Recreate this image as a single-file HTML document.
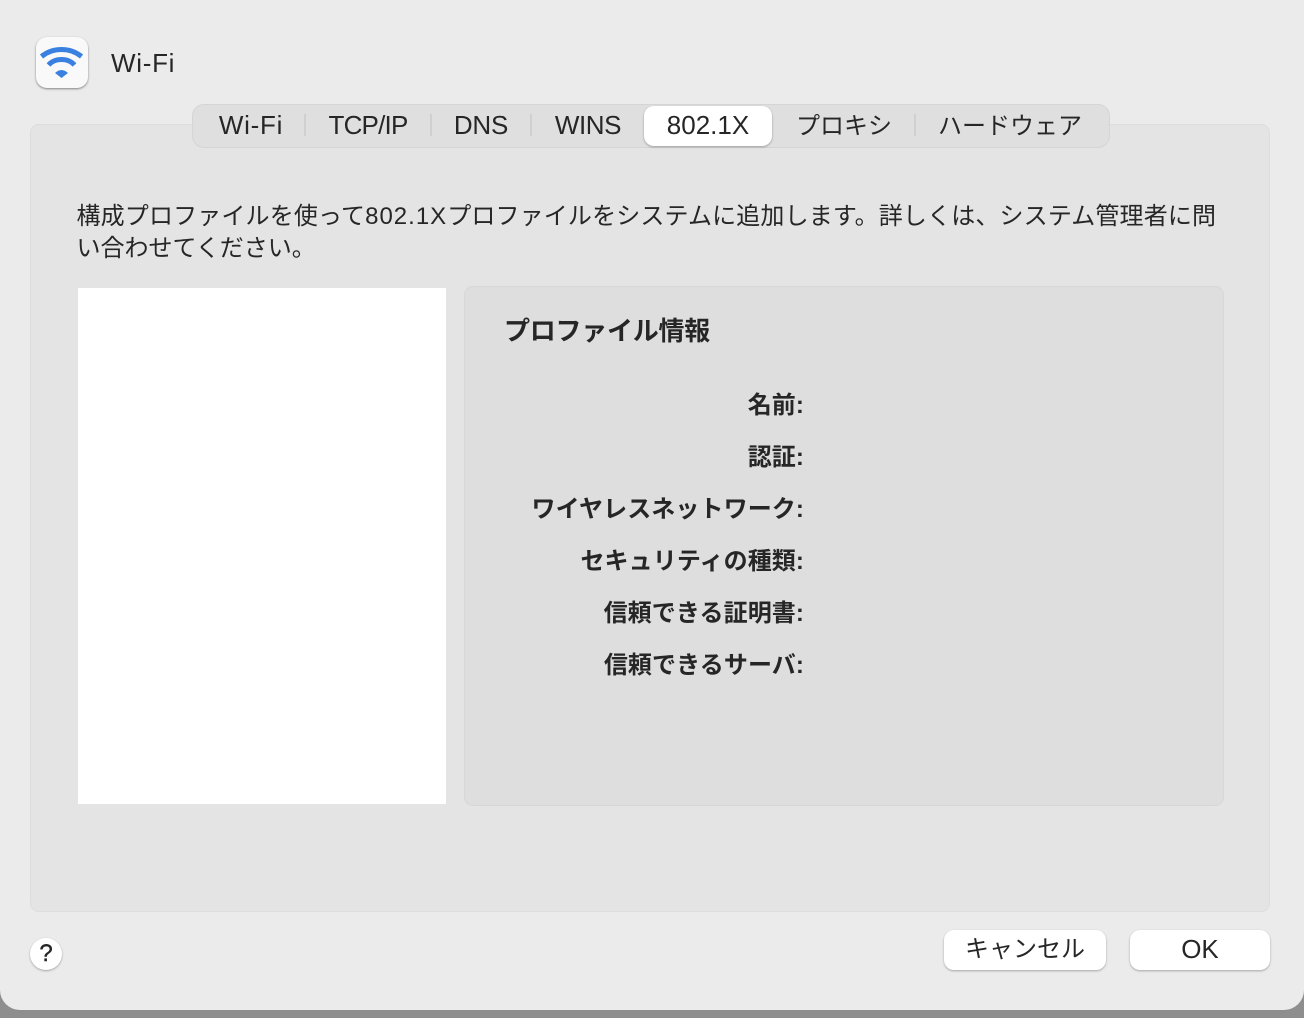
<!DOCTYPE html>
<html lang="ja">
<head>
<meta charset="utf-8">
<style>
html,body{margin:0;padding:0;width:1304px;height:1018px;overflow:hidden;background:#8e8e8e}
body{position:relative;font-family:"Liberation Sans","Noto Sans CJK JP",sans-serif;color:#262626}
.win{position:absolute;left:0;top:-20px;width:1304px;height:1030px;background:#ebebeb;border-radius:20px;overflow:hidden}
.a{position:absolute;white-space:nowrap}
#page{position:absolute;left:0;top:0;width:1304px;height:1018px}
.panel{position:absolute;left:30px;top:124px;width:1238px;height:786px;background:#e4e4e4;border:1px solid #dddddd;border-radius:9px}
.tabs{position:absolute;left:192px;top:104px;width:916px;height:42px;background:#dfdfdf;border:1px solid #d5d5d5;border-radius:12px}
.sel{position:absolute;left:644px;top:106px;width:128px;height:40px;background:#fff;border-radius:10px;box-shadow:0 1px 2px rgba(0,0,0,.3)}
.sep{position:absolute;top:114px;width:2px;height:22px;background:#d0d0d0}
.tab{position:absolute;top:108px;height:34px;line-height:34px;font-size:26px;text-align:center;white-space:nowrap}
.jp{font-size:24px;top:110px}
.lab{position:absolute;left:464px;width:340px;text-align:right;font-size:24px;font-weight:bold;line-height:32px;white-space:nowrap;letter-spacing:.1px}
.btn{position:absolute;top:930px;height:40px;line-height:38px;background:#fff;border-radius:10px;box-shadow:0 1px 2px rgba(0,0,0,.3);text-align:center;font-size:26px}
.lat{letter-spacing:1px}
</style>
</head>
<body>
<div class="win"></div>
<div id="page">
  <div class="a" style="left:36px;top:37px;width:52px;height:51px;border-radius:11px;background:#f9f9fa;box-shadow:0 1px 2px rgba(0,0,0,.45)"></div>
  <svg class="a" style="left:36px;top:37px" width="52" height="52" viewBox="0 0 52 52" fill="none">
    <path d="M5.500 19.500C17 10.200 34 10.200 45.500 19.500" stroke="#3a80e0" stroke-width="5"/>
    <path d="M12.500 28C19 20.700 32 20.700 38.500 28" stroke="#3a80e0" stroke-width="5"/>
    <path d="M19 36Q25.500 30 32 36L25.500 41Z" fill="#3a80e0"/>
  </svg>
  <div class="a" style="left:111px;top:46px;font-size:26px;line-height:34px;letter-spacing:.7px">Wi-Fi</div>

  <div class="panel"></div>
  <div class="tabs"></div>
  <div class="sel"></div>
  <div class="sep" style="left:304px"></div>
  <div class="sep" style="left:430px"></div>
  <div class="sep" style="left:530px"></div>
  <div class="sep" style="left:914px"></div>
  <div class="tab" style="left:192px;width:118px;letter-spacing:.7px">Wi-Fi</div>
  <div class="tab" style="left:308px;width:120px;letter-spacing:-.8px">TCP/IP</div>
  <div class="tab" style="left:432px;width:98px;letter-spacing:-.2px">DNS</div>
  <div class="tab" style="left:532px;width:112px;letter-spacing:-.4px">WINS</div>
  <div class="tab" style="left:644px;width:128px">802.1X</div>
  <div class="tab jp" style="left:772px;width:144px">プロキシ</div>
  <div class="tab jp" style="left:916px;width:188px">ハードウェア</div>

  <div class="a" style="left:76.500px;top:200.500px;font-size:24px;line-height:32px;letter-spacing:.15px">構成プロファイルを使って<span class="lat">802.1X</span>プロファイルをシステムに追加します。詳しくは、システム管理者に問</div>
  <div class="a" style="left:76.500px;top:232.500px;font-size:24px;line-height:32px">い合わせてください。</div>

  <div class="a" style="left:78px;top:288px;width:368px;height:516px;background:#fff"></div>
  <div class="a" style="left:464px;top:286px;width:758px;height:518px;background:#dedede;border:1px solid #d7d7d7;border-radius:9px"></div>
  <div class="a" style="left:504px;top:314px;font-size:26px;font-weight:bold;line-height:34px;letter-spacing:-.25px">プロファイル情報</div>

  <div class="lab" style="top:390px">名前:</div>
  <div class="lab" style="top:442px">認証:</div>
  <div class="lab" style="top:494px">ワイヤレスネットワーク:</div>
  <div class="lab" style="top:546px">セキュリティの種類:</div>
  <div class="lab" style="top:598px">信頼できる証明書:</div>
  <div class="lab" style="top:650px">信頼できるサーバ:</div>

  <div class="a" style="left:30px;top:938px;width:32px;height:32px;border-radius:50%;background:#fff;box-shadow:0 1px 2px rgba(0,0,0,.3);text-align:center;font-size:24px;line-height:32px;-webkit-text-stroke:.4px #262626">?</div>
  <div class="btn" style="left:944px;width:162px;font-size:24px;line-height:40px">キャンセル</div>
  <div class="btn" style="left:1130px;width:140px">OK</div>
</div>
</body>
</html>
